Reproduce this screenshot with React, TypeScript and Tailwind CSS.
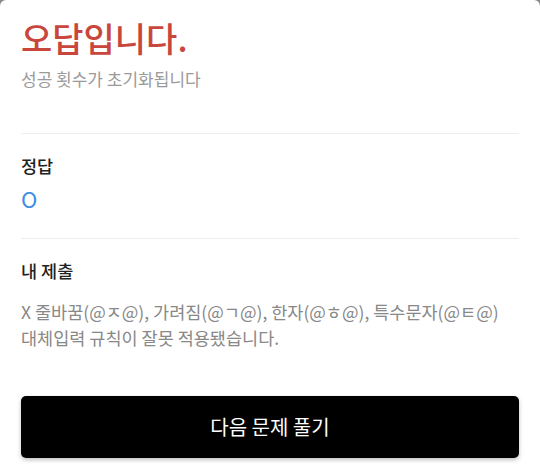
export default function App() {
  return (
    <div
      className="w-[540px] h-[464px] bg-[#8a8a8a] overflow-hidden"
      style={{ fontFamily: '"Noto Sans CJK KR", "Noto Sans", sans-serif' }}
    >
      <div className="h-full bg-white rounded-t-[6px] px-[21px] pt-[14px]">
        <h1 className="text-[34px] leading-[48px] font-medium text-[#c9463d]">
          오답입니다.
        </h1>
        <p className="mt-[5px] text-[17px] leading-[24px] text-[#9a9a9a]">
          성공 횟수가 초기화됩니다
        </p>

        <div className="mt-[42px] border-t border-[#eeeeee]" />

        <div className="pt-[20px] pb-[26px]">
          <h2 className="text-[17.5px] leading-[24px] font-medium text-[#222]">정답</h2>
          <p className="mt-[6px] text-[22px] leading-[28px] text-[#3a8ee6]">O</p>
        </div>

        <div className="border-t border-[#eeeeee]" />

        <div className="pt-[20px]">
          <h2 className="text-[17.5px] leading-[24px] font-medium text-[#222]">내 제출</h2>
          <p className="mt-[16px] text-[17.5px] leading-[26px] text-[#888]">
            X 줄바꿈(@ㅈ@), 가려짐(@ㄱ@), 한자(@ㅎ@), 특수문자(@ㅌ@)
            <br />
            대체입력 규칙이 잘못 적용됐습니다.
          </p>
        </div>

        <button className="mt-[45px] w-full h-[62px] bg-black rounded-[5px] text-white text-[20px] shadow-[0_2px_4px_rgba(0,0,0,0.25)]">
          다음 문제 풀기
        </button>
      </div>
    </div>
  );
}
